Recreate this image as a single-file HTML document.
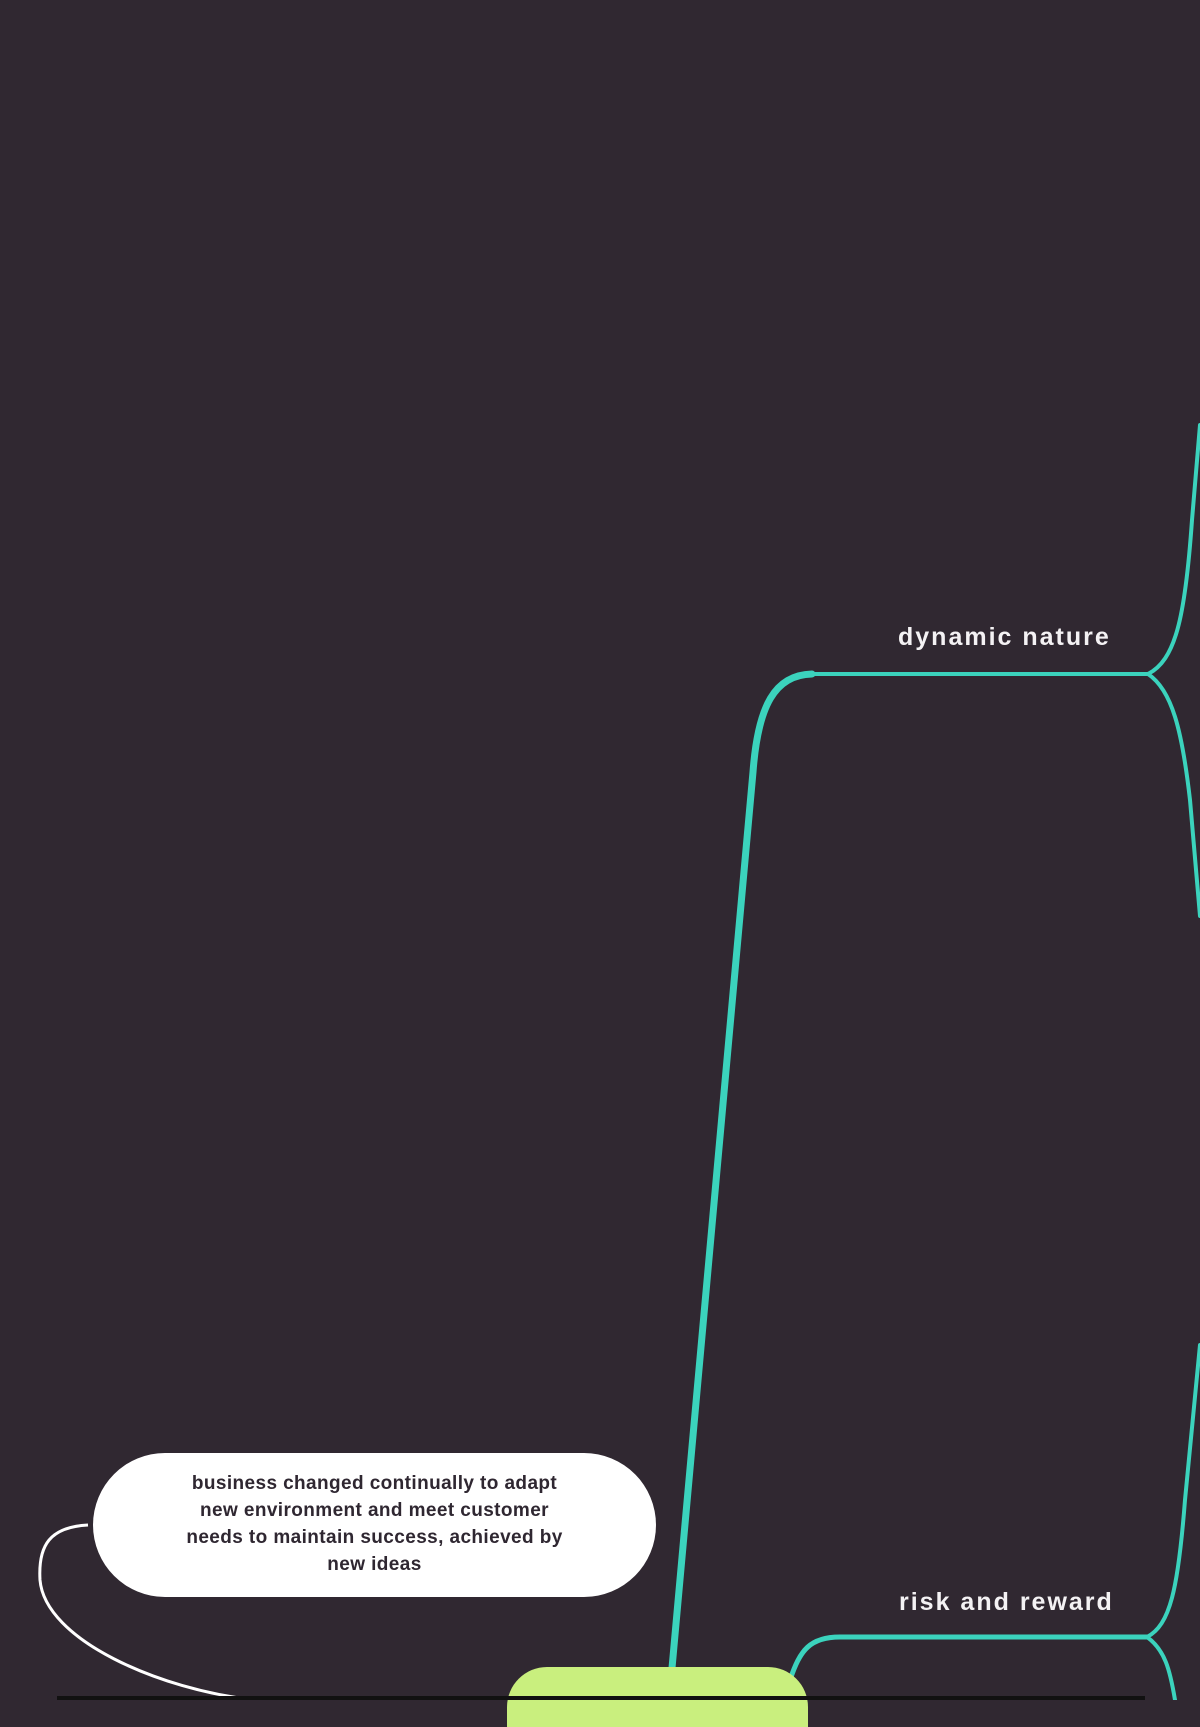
<!DOCTYPE html>
<html><head><meta charset="utf-8"><style>
html,body{margin:0;padding:0;}
body{width:1200px;height:1700px;background:#302831;position:relative;overflow:hidden;font-family:"Liberation Sans",sans-serif;}
svg{position:absolute;left:0;top:0;}
.lbl{position:absolute;color:#f4f2f4;font-weight:bold;font-size:25px;letter-spacing:2px;white-space:nowrap;}
.bubble{position:absolute;left:93px;top:1453px;width:563px;height:144px;background:#fff;border-radius:72px;box-sizing:border-box;padding:17px 0 0;text-align:center;color:#2f2731;font-weight:bold;font-size:19px;line-height:27px;letter-spacing:0.4px;white-space:nowrap;}
.lime{position:absolute;left:507px;top:1667px;width:301px;height:60px;background:#c9ef7e;border-radius:40px 40px 0 0;}
.bar{position:absolute;left:57px;top:1696px;width:1088px;height:4px;background:#111;}
</style></head><body>
<svg width="1200" height="1700" viewBox="0 0 1200 1700">
<g fill="none" stroke="#3bd3bd" stroke-linecap="round">
<path d="M672 1668 L753 772 C758 705 775 675 812 674" stroke-width="7"/>
<path d="M812 674 L1148 674" stroke-width="4"/>
<path d="M1148 674 C1175 660 1185 620 1192 520 L1200 425" stroke-width="4"/>
<path d="M1148 674 C1172 690 1182 730 1190 800 L1200 916" stroke-width="4"/>
<path d="M790 1680 C800 1650 810 1637 840 1637 L1147 1637" stroke-width="5"/>
<path d="M1147 1637 C1170 1625 1178 1590 1185 1500 L1200 1345" stroke-width="4"/>
<path d="M1147 1637 C1165 1650 1170 1670 1175 1700" stroke-width="4"/>
</g>
<path d="M88 1525 C50 1527 38 1545 40 1580 C45 1640 160 1690 255 1700" fill="none" stroke="#fff" stroke-width="3"/>
</svg>
<div class="lbl" style="left:898px;top:623px;">dynamic nature</div>
<div class="lbl" style="left:899px;top:1588px;">risk and reward</div>
<div class="bubble">business changed continually to adapt<br>new environment and meet customer<br>needs to maintain success, achieved by<br>new ideas</div>
<div class="lime"></div>
<div class="bar"></div>
</body></html>
